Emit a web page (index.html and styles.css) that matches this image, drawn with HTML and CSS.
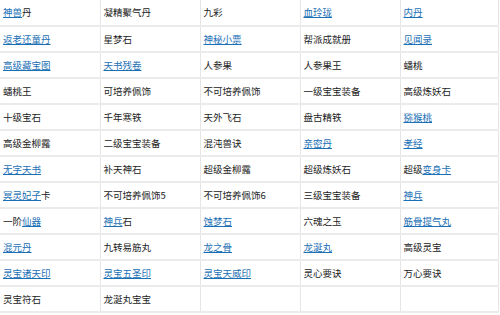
FILE: index.html
```html
<!DOCTYPE html>
<html lang="zh">
<head>
<meta charset="utf-8">
<link rel="stylesheet" href="styles.css">
</head>
<body>
<table class="items">
<colgroup><col class="c"><col class="c"><col class="c"><col class="c"><col class="c-last"></colgroup>
<tr><td><a href="#">神兽</a>丹</td><td>凝精聚气丹</td><td>九彩</td><td><a href="#">血玲珑</a></td><td><a href="#">内丹</a></td></tr>
<tr><td><a href="#">返老还童丹</a></td><td>星梦石</td><td><a href="#">神秘小票</a></td><td>帮派成就册</td><td><a href="#">见闻录</a></td></tr>
<tr><td><a href="#">高级藏宝图</a></td><td><a href="#">天书残卷</a></td><td>人参果</td><td>人参果王</td><td>蟠桃</td></tr>
<tr><td>蟠桃王</td><td>可培养佩饰</td><td>不可培养佩饰</td><td>一级宝宝装备</td><td>高级炼妖石</td></tr>
<tr><td>十级宝石</td><td>千年寒铁</td><td>天外飞石</td><td>盘古精铁</td><td><a href="#">猕猴桃</a></td></tr>
<tr><td>高级金柳露</td><td>二级宝宝装备</td><td>混沌兽诀</td><td><a href="#">亲密丹</a></td><td><a href="#">孝经</a></td></tr>
<tr><td><a href="#">无字天书</a></td><td>补天神石</td><td>超级金柳露</td><td>超级炼妖石</td><td>超级<a href="#">变身卡</a></td></tr>
<tr><td><a href="#">冥灵妃子</a>卡</td><td>不可培养佩饰5</td><td>不可培养佩饰6</td><td>三级宝宝装备</td><td><a href="#">神兵</a></td></tr>
<tr><td>一阶<a href="#">仙器</a></td><td><a href="#">神兵</a>石</td><td><a href="#">蚀梦石</a></td><td>六魂之玉</td><td><a href="#">筋骨提气丸</a></td></tr>
<tr><td><a href="#">混元丹</a></td><td>九转易筋丸</td><td><a href="#">龙之骨</a></td><td><a href="#">龙涎丸</a></td><td>高级灵宝</td></tr>
<tr><td><a href="#">灵宝诸天印</a></td><td><a href="#">灵宝五圣印</a></td><td><a href="#">灵宝天威印</a></td><td>灵心要诀</td><td>万心要诀</td></tr>
<tr><td>灵宝符石</td><td>龙涎丸宝宝</td><td></td><td></td><td></td></tr>
</table>
</body>
</html>
```
FILE: styles.css
```css
html, body {
  margin: 0;
  padding: 0;
  background: #ffffff;
}
body {
  font-family: "Noto Sans CJK SC", "Liberation Sans", sans-serif;
  font-size: 9.5px;
  color: #222222;
}
.items {
  border-collapse: collapse;
  width: 498px;
  table-layout: fixed;
}
.items col.c {
  width: 100px;
}
.items col.c-last {
  width: 98px;
}
.items td {
  box-sizing: border-box;
  height: 26px;
  padding: 0 0 0 3px;
  border: 1px solid #e6e6e6;
  border-bottom: 2px solid #ebebeb;
  white-space: nowrap;
  overflow: hidden;
  line-height: 23px;
  vertical-align: middle;
}
.items tr:first-child td {
  border-top: none;
}
.items td:first-child {
  border-left: none;
}
.items a {
  color: #1a6fb5;
  text-decoration: underline;
}
```
